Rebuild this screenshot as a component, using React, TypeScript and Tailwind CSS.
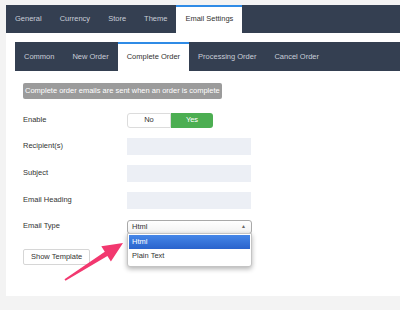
import React from "react";

const TOP_TABS = ["General", "Currency", "Store", "Theme", "Email Settings"];
const SUB_TABS = ["Common", "New Order", "Complete Order", "Processing Order", "Cancel Order"];

function TabBar({
  tabs,
  active,
  className,
}: {
  tabs: string[];
  active: string;
  className: string;
}) {
  return (
    <div className={`flex bg-[#343f51] ${className}`}>
      {tabs.map((t) =>
        t === active ? (
          <div
            key={t}
            className="flex items-center border-t-2 border-[#2f8be6] bg-white px-[9px] pb-[2px] text-[#333]"
          >
            {t}
          </div>
        ) : (
          <div key={t} className="flex items-center px-[9px] text-[#c9ced8]">
            {t}
          </div>
        )
      )}
    </div>
  );
}

function Row({ label, children }: { label: string; children: React.ReactNode }) {
  return (
    <div className="flex items-center">
      <div className="w-[104px] text-[#333]">{label}</div>
      {children}
    </div>
  );
}

export default function App() {
  return (
    <div
      className="relative h-[310px] w-[400px] overflow-hidden bg-[#f3f3f3] pl-[6px] pt-[5px] text-[7.5px] leading-none"
      style={{ fontFamily: '"Liberation Sans", Arial, sans-serif' }}
    >
      <TabBar tabs={TOP_TABS} active="Email Settings" className="h-[28px]" />

      <div className="h-[263px] bg-white pl-[9px] pt-[9px]">
        <TabBar tabs={SUB_TABS} active="Complete Order" className="h-[29px]" />

        <div className="pl-[8px] pt-[12px]">
          <div className="inline-block rounded-[2px] bg-[#9b9b9b] px-[2px] py-[4px] text-white">
            Complete order emails are sent when an order is complete
          </div>

          <div className="mt-[14px] flex flex-col gap-[10px]">
            <Row label="Enable">
              <div className="flex h-[15px] w-[86px] text-[#333]">
                <div className="flex flex-1 items-center justify-center rounded-l-[3px] border border-[#dcdcdc] bg-white">
                  No
                </div>
                <div className="flex flex-1 items-center justify-center rounded-r-[3px] bg-[#4cae52] text-white">
                  Yes
                </div>
              </div>
            </Row>
            <Row label="Recipient(s)">
              <div className="h-[17px] w-[124px] bg-[#eceff5]" />
            </Row>
            <Row label="Subject">
              <div className="h-[17px] w-[124px] bg-[#eceff5]" />
            </Row>
            <Row label="Email Heading">
              <div className="h-[17px] w-[124px] bg-[#eceff5]" />
            </Row>
            <Row label="Email Type">
              <div className="relative mt-px">
                <div className="flex h-[14px] w-[125px] items-center justify-between rounded-[3px] border border-[#a9a9a9] bg-gradient-to-b from-white to-[#f2f2f2] pl-[4px] pr-[5px] text-[#333]">
                  <span>Html</span>
                  <span className="text-[5px] text-[#666]">▲</span>
                </div>
                <div className="absolute left-0 top-[13px] z-10 w-[125px] rounded-b-[3px] border border-[#c4c4c4] bg-white p-[1px] pb-[3px] shadow-[0_2px_5px_rgba(0,0,0,0.3)]">
                  <div className="flex h-[14px] items-center bg-gradient-to-b from-[#4586e8] to-[#2a63cc] pl-[3px] text-white">
                    Html
                  </div>
                  <div className="flex h-[14px] items-center pl-[3px] text-[#333]">Plain Text</div>
                </div>
              </div>
            </Row>
          </div>

          <div className="mt-[15px] inline-flex h-[16px] items-center rounded-[2px] border border-[#d6d6d6] bg-white px-[7px] text-[#333]">
            Show Template
          </div>
        </div>
      </div>

      <svg
        className="pointer-events-none absolute left-0 top-0 z-20"
        width="400"
        height="310"
        viewBox="0 0 400 310"
      >
        <polygon
          points="64.5,279.2 104.8,251.7 101.3,246.2 123,243 110.9,261.4 107.4,255.9 65.5,280.8"
          fill="#f2386f"
        />
      </svg>
    </div>
  );
}
